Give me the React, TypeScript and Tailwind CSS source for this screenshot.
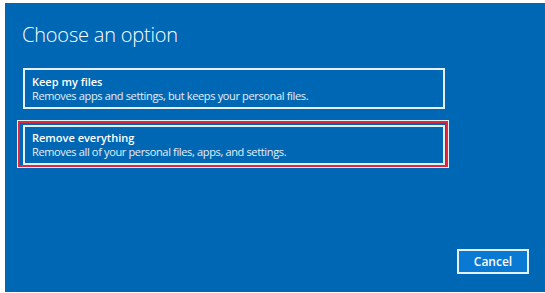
import React from 'react';

const font = { fontFamily: '"Segoe UI", "Open Sans", "Noto Sans", sans-serif' };

export default function App() {
  return (
    <div className="w-[545px] h-[293px] bg-white pl-[5px] pt-[3px] pb-[1px]" style={font}>
      <div className="h-full bg-[#0067b4] flex flex-col text-white">
        {/* Title */}
        <h1 className="pl-[17px] pt-[19px] text-[20px] leading-[26px] font-light tracking-[-0.2px]">
          Choose an option
        </h1>

        {/* Option 1 */}
        <div className="ml-[18px] mt-[20px] w-[422px] h-[41px] border-2 border-white/90 pl-[7px] pt-[5px]">
          <div className="text-[11px] leading-[14px] font-semibold">Keep my files</div>
          <div className="text-[11px] leading-[14px] tracking-[-0.35px] text-white/90">
            Removes apps and settings, but keeps your personal files.
          </div>
        </div>

        {/* Option 2 - highlighted */}
        <div className="ml-[13px] mt-[12px] w-[430px] h-[46px] border-2 border-[#e0283c] shadow-[0_0_0_1px_rgba(255,255,255,0.9)] pl-[3px] pt-[2px]">
          <div className="w-[422px] h-[40px] border-2 border-white/90 pl-[7px] pt-[4px]">
            <div className="text-[11px] leading-[14px] font-semibold">Remove everything</div>
            <div className="text-[11px] leading-[14px] tracking-[-0.35px] text-white/90">
              Removes all of your personal files, apps, and settings.
            </div>
          </div>
        </div>

        {/* Cancel */}
        <div className="flex-1 flex items-end justify-end pr-[16px] pb-[18px]">
          <button className="w-[72px] h-[25px] bg-[#0a79d4] border-2 border-white/90 text-[12px] font-semibold text-white">
            Cancel
          </button>
        </div>
      </div>
    </div>
  );
}
